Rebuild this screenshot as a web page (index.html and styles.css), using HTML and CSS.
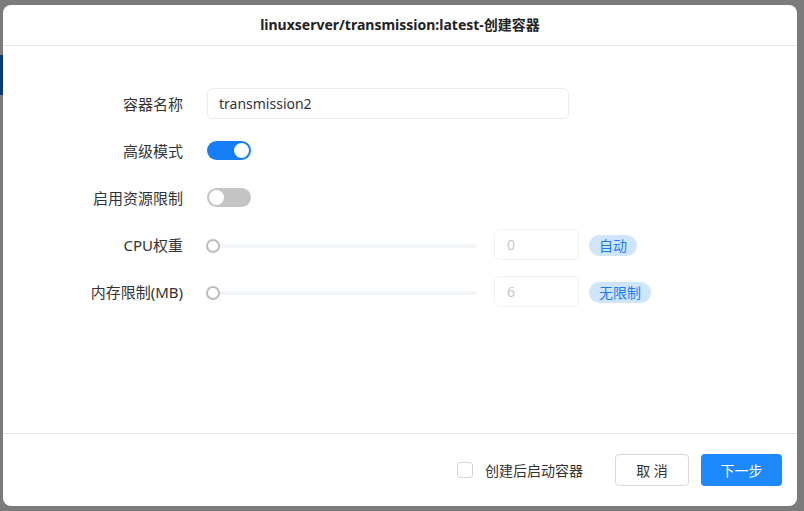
FILE: index.html
```html
<!DOCTYPE html>
<html lang="zh-CN">
<head>
<meta charset="UTF-8">
<title>创建容器</title>
<link rel="stylesheet" href="styles.css">
</head>
<body>
    <div class="side-mark"></div>
    <div class="dialog">
        <div class="dialog-header">linuxserver/transmission:latest-创建容器</div>

        <div class="dialog-body">
            <div class="form-row">
                <label class="form-label">容器名称</label>
                <input class="text-input" type="text" value="transmission2">
            </div>
            <div class="form-row">
                <label class="form-label">高级模式</label>
                <span class="switch on"><span class="knob"></span></span>
            </div>
            <div class="form-row">
                <label class="form-label">启用资源限制</label>
                <span class="switch"><span class="knob"></span></span>
            </div>
            <div class="form-row">
                <label class="form-label">CPU权重</label>
                <div class="slider"><span class="handle"></span></div>
                <input class="num-input" type="text" placeholder="0" disabled>
                <span class="tag">自动</span>
            </div>
            <div class="form-row">
                <label class="form-label">内存限制(MB)</label>
                <div class="slider"><span class="handle"></span></div>
                <input class="num-input" type="text" placeholder="6" disabled>
                <span class="tag">无限制</span>
            </div>
        </div>

        <div class="dialog-footer">
            <label class="check">
                <span class="check-box"></span>
                创建后启动容器
            </label>
            <button class="btn btn-default">取 消</button>
            <button class="btn btn-primary">下一步</button>
        </div>
    </div>
</body>
</html>
```

FILE: styles.css
```css
body {
    margin: 0;
    padding: 5px 7px 0 3px;
    background-color: #7b7b7b;
    font-family: "Noto Sans", "Noto Sans CJK SC", sans-serif;
    font-size: 14px;
    color: #333;
    height: 506px;
    box-sizing: border-box;
    overflow: hidden;
    position: relative;
}
.side-mark {
    position: absolute;
    left: 0;
    top: 55px;
    width: 3px;
    height: 40px;
    background-color: #0c3c6e;
}
.dialog {
    background-color: #fff;
    border-radius: 8px;
    height: 501px;
    display: flex;
    flex-direction: column;
}
.dialog-header {
    height: 40px;
    line-height: 40px;
    text-align: center;
    font-weight: bold;
    font-size: 14px;
    color: #222;
    border-bottom: 1px solid #e5e5e5;
}
.dialog-body {
    flex: 1;
    padding-top: 42px;
    display: flex;
    flex-direction: column;
    gap: 16px;
}
.form-row {
    display: flex;
    align-items: center;
    height: 31px;
}
.form-label {
    width: 180px;
    text-align: right;
    margin-right: 24px;
    color: #333;
    font-size: 15px;
}
.text-input {
    width: 362px;
    height: 31px;
    box-sizing: border-box;
    border: 1px solid #ececec;
    border-radius: 6px;
    padding: 0 11px;
    font-family: inherit;
    font-size: 14px;
    color: #333;
    outline: none;
}
.switch {
    width: 44px;
    height: 19px;
    border-radius: 10px;
    background-color: #c4c4c4;
    position: relative;
}
.switch.on {
    background-color: #157ef6;
}
.knob {
    position: absolute;
    top: 2px;
    left: 2px;
    width: 15px;
    height: 15px;
    border-radius: 50%;
    background-color: #fff;
}
.switch.on .knob {
    left: 27px;
}
.slider {
    width: 270px;
    height: 4px;
    background-color: #f2f5f8;
    border-radius: 2px;
    position: relative;
    margin-right: 17px;
    margin-top: 3px;
}
.handle {
    position: absolute;
    left: -1px;
    top: -5px;
    width: 10px;
    height: 10px;
    border: 2px solid #bdbdbd;
    border-radius: 50%;
    background-color: #fff;
}
.num-input {
    width: 85px;
    height: 31px;
    box-sizing: border-box;
    border: 1px solid #f0f0f0;
    border-radius: 6px;
    padding: 0 12px;
    font-family: inherit;
    font-size: 14px;
    background-color: #fff;
    margin-right: 10px;
}
.num-input::placeholder {
    color: #c8c8c8;
}
.tag {
    background-color: #cfe5fd;
    color: #1a7cf0;
    border-radius: 11px;
    padding: 0 10px;
    height: 21px;
    line-height: 21px;
    font-size: 14px;
    margin-top: 1px;
}
.dialog-footer {
    height: 72px;
    border-top: 1px solid #e5e5e5;
    display: flex;
    align-items: center;
    justify-content: flex-end;
    padding-right: 15px;
}
.check {
    display: flex;
    align-items: center;
    font-size: 14px;
    color: #333;
    margin-right: 32px;
}
.check-box {
    width: 14px;
    height: 14px;
    border: 1px solid #d4d4d4;
    border-radius: 3px;
    margin-right: 12px;
}
.btn {
    height: 32px;
    border-radius: 4px;
    font-family: inherit;
    font-size: 14px;
    cursor: pointer;
}
.btn-default {
    width: 74px;
    background-color: #fff;
    border: 1px solid #d9d9d9;
    color: #333;
    margin-right: 12px;
}
.btn-primary {
    width: 81px;
    background-color: #1e88fd;
    border: none;
    color: #fff;
}
```
